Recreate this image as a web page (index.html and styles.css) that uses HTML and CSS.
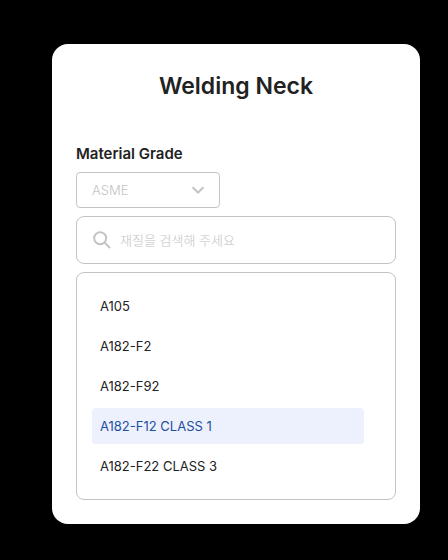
FILE: index.html
```html
<!DOCTYPE html>
<html lang="ko">
  <head>
    <meta charset="UTF-8" />
    <meta name="viewport" content="width=device-width, initial-scale=1.0" />
    <title>Welding Neck</title>
    <link rel="stylesheet" href="styles.css">
  </head>
  <body>
    <main class="card">
      <h1 class="title">Welding Neck</h1>

      <label class="field-label" for="standard">Material Grade</label>
      <div class="select-box">
        <select class="select" id="standard">
          <option>ASME</option>
        </select>
        <svg class="chevron" viewBox="0 0 14 8" width="14" height="8" aria-hidden="true">
          <path d="M1.5 1.2 L7 6.5 L12.5 1.2" />
        </svg>
      </div>

      <div class="search">
        <svg class="search-icon" viewBox="0 0 20 20" width="20" height="20" aria-hidden="true">
          <circle cx="8.2" cy="8.2" r="6" />
          <path d="M12.6 12.6 L18 18" />
        </svg>
        <input class="search-input" type="text" placeholder="재질을 검색해 주세요" aria-label="재질을 검색해 주세요">
      </div>

      <!-- Search results -->
      <ul class="grades">
        <li><button class="grade" type="button">A105</button></li>
        <li><button class="grade" type="button">A182-F2</button></li>
        <li><button class="grade" type="button">A182-F92</button></li>
        <li><button class="grade selected" type="button">A182-F12 CLASS 1</button></li>
        <li><button class="grade" type="button">A182-F22 CLASS 3</button></li>
      </ul>
    </main>

    <script>
      const grades = document.querySelectorAll('.grade');

      grades.forEach((grade) => {
        grade.addEventListener('click', () => {
          grades.forEach((item) => item.classList.remove('selected'));
          grade.classList.add('selected');
        });
      });
    </script>
  </body>
</html>
```

FILE: styles.css
```css
* {
  box-sizing: border-box;
}

body {
  margin: 0;
  padding: 44px 28px 36px 52px;
  background: #000;
  color: #222;
  font-family: Inter, "Noto Sans CJK KR", sans-serif;
  font-size: 13px;
}

.card {
  padding: 24px;
  border-radius: 16px;
  background: #fff;
}

.title {
  margin: 0 0 40px;
  font-size: 23px;
  font-weight: 600;
  line-height: 36px;
  text-align: center;
}

.field-label {
  display: block;
  margin-bottom: 8px;
  font-size: 15px;
  font-weight: 600;
  line-height: 20px;
}

/* Standard drop-down */
.select-box {
  display: grid;
  align-items: center;
  width: 144px;
  margin-bottom: 8px;
}

.select,
.chevron {
  grid-area: 1 / 1;
}

.select {
  width: 100%;
  height: 36px;
  padding: 0 32px 0 15px;
  border: 1px solid #c4c4c4;
  border-radius: 4px;
  background: #fff;
  color: #c4c4c4;
  font: inherit;
  font-weight: 300;
  appearance: none;
}

.chevron {
  justify-self: end;
  margin-right: 15px;
  fill: none;
  stroke: #c4c4c4;
  stroke-width: 2;
  pointer-events: none;
}

/* Search box */
.search {
  display: flex;
  align-items: center;
  gap: 8px;
  height: 48px;
  margin-bottom: 8px;
  padding: 0 15px;
  border: 1px solid #c4c4c4;
  border-radius: 8px;
}

.search-icon {
  flex: none;
  fill: none;
  stroke: #c4c4c4;
  stroke-width: 2;
}

.search-input {
  flex: 1;
  min-width: 0;
  padding: 0;
  border: 0;
  outline: 0;
  background: none;
  font: inherit;
  font-weight: 300;
}

.search-input::placeholder {
  color: #c4c4c4;
}

/* Grade list */
.grades {
  display: grid;
  gap: 4px;
  margin: 0;
  padding: 15px 31px 15px 15px;
  border: 1px solid #c4c4c4;
  border-radius: 8px;
  list-style: none;
}

.grade {
  display: block;
  width: 100%;
  height: 36px;
  padding: 0 8px;
  border: 0;
  border-radius: 4px;
  background: none;
  color: #222;
  font: inherit;
  text-align: left;
  cursor: pointer;
}

.grade.selected {
  background: #ecf1fd;
  color: #1f4e9e;
}
```
